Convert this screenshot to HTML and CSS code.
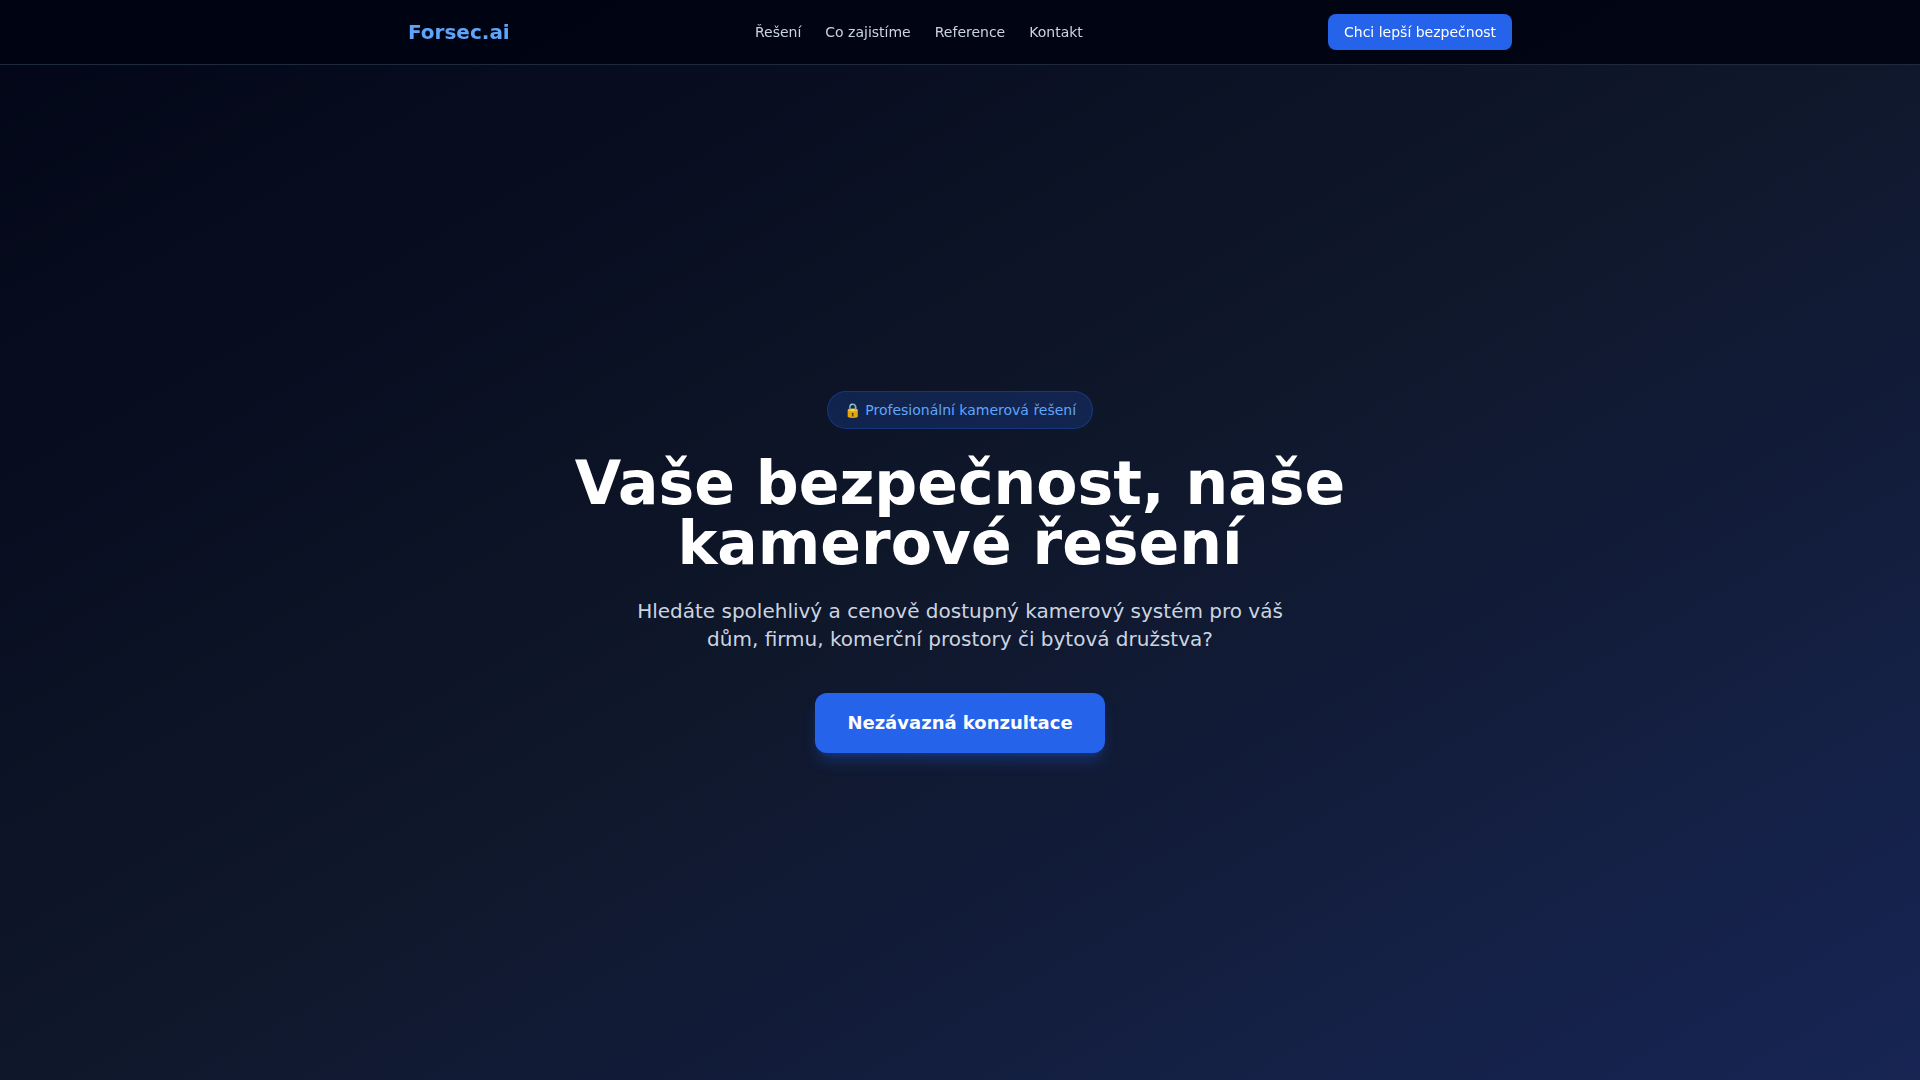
FILE: index.html
```
<!DOCTYPE html>
<html lang="cs">
<head>
  <meta charset="UTF-8" />
  <meta name="viewport" content="width=device-width, initial-scale=1.0" />
  <title>Forsec.ai</title>
  <link rel="stylesheet" href="styles.css">
</head>
<body>
  <header class="site-header">
    <div class="header-inner">
      <a href="#" class="logo">Forsec.ai</a>
      <nav class="main-nav">
        <a href="#reseni">Řešení</a>
        <a href="#zajistime">Co zajistíme</a>
        <a href="#reference">Reference</a>
        <a href="#kontakt">Kontakt</a>
      </nav>
      <button type="button" class="header-btn">Chci lepší bezpečnost</button>
    </div>
  </header>

  <main class="hero">
    <div class="hero-content">
      <span class="badge">🔒 Profesionální kamerová řešení</span>
      <h1>Vaše bezpečnost, naše kamerové řešení</h1>
      <p>Hledáte spolehlivý a cenově dostupný kamerový systém pro váš dům, firmu, komerční prostory či bytová družstva?</p>
      <button type="button" class="hero-btn">Nezávazná konzultace</button>
    </div>
  </main>
</body>
</html>
```
FILE: styles.css
```
* {
  box-sizing: border-box;
}
body {
  margin: 0;
  min-height: 100vh;
  font-family: "DejaVu Sans", sans-serif;
  color: #fff;
  background: #020617;
}
a {
  text-decoration: none;
}
button {
  font-family: inherit;
  color: #fff;
  background: #2563eb;
  border: none;
  cursor: pointer;
}
button:hover {
  background: #1d4ed8;
}
.site-header {
  position: fixed;
  top: 0;
  left: 0;
  right: 0;
  z-index: 10;
  background: rgba(0, 3, 18, 0.9);
  border-bottom: 1px solid #1e293b;
}
.header-inner {
  display: flex;
  align-items: center;
  justify-content: space-between;
  max-width: 1152px;
  height: 64px;
  margin: 0 auto;
  padding: 0 24px;
}
.logo {
  font-size: 20px;
  font-weight: 700;
  color: #60a5fa;
}
.main-nav {
  display: flex;
  gap: 24px;
}
.main-nav a {
  font-size: 14px;
  color: #cbd5e1;
}
.header-btn {
  padding: 8px 16px;
  font-size: 14px;
  line-height: 20px;
  border-radius: 8px;
}
.hero {
  display: flex;
  align-items: center;
  justify-content: center;
  min-height: 100vh;
  padding: 128px 24px 64px;
  text-align: center;
  background: linear-gradient(to bottom right, #020617, #0f172a, #172554);
}
.hero-content {
  max-width: 896px;
}
.badge {
  display: inline-block;
  margin-bottom: 24px;
  padding: 8px 16px;
  font-size: 14px;
  line-height: 20px;
  color: #60a5fa;
  background: rgba(37, 99, 235, 0.2);
  border: 1px solid rgba(37, 99, 235, 0.3);
  border-radius: 999px;
}
.hero h1 {
  margin: 0 0 24px;
  font-size: 60px;
  line-height: 60px;
  font-weight: 700;
}
.hero p {
  max-width: 672px;
  margin: 0 auto 40px;
  font-size: 20px;
  line-height: 28px;
  color: #cbd5e1;
}
.hero-btn {
  padding: 16px 32px;
  font-size: 18px;
  line-height: 28px;
  font-weight: 600;
  border-radius: 12px;
  box-shadow: 0 10px 15px -3px rgba(37, 99, 235, 0.3), 0 4px 6px -4px rgba(37, 99, 235, 0.3);
}
```
